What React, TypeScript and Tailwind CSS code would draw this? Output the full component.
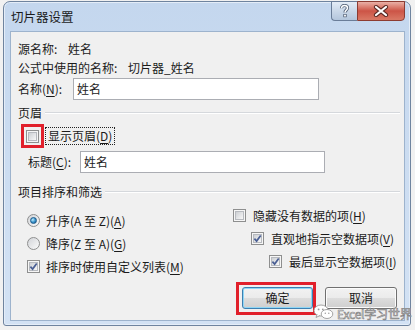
import React from 'react';

const font = "font-['Noto_Sans_CJK_SC','Microsoft_YaHei',sans-serif]";

function U({ children }: { children: React.ReactNode }) {
  return <span className="underline decoration-[1px] underline-offset-[2px]">{children}</span>;
}

function CheckBox({ checked = false }: { checked?: boolean }) {
  return (
    <span className="relative flex h-[13px] w-[13px] shrink-0 items-center justify-center border border-[#8e8f8f] bg-[#f6f6f6]">
      <span className="h-[9px] w-[9px] border border-[#b7babf] bg-linear-to-br from-[#cdd0d4] to-[#f8f8f8]" />
      {checked && (
        <svg className="absolute left-[1px] top-[1px]" width="9" height="9" viewBox="0 0 9 9">
          <path d="M1.4 4.6 L3.6 7.1 L7.7 1.5" fill="none" stroke="#4a5f94" strokeWidth="1.7" />
        </svg>
      )}
    </span>
  );
}

function Radio({ checked = false }: { checked?: boolean }) {
  return (
    <span className="flex h-[13px] w-[13px] shrink-0 items-center justify-center rounded-full border border-[#8e8f8f] bg-linear-to-br from-[#d2d4d8] to-[#fbfbfb]">
      {checked && (
        <span className="h-[7px] w-[7px] rounded-full border border-[#1d5a8a] bg-[radial-gradient(circle_at_35%_35%,#c4ecfc_0%,#3c98cf_50%,#0f5690_100%)]" />
      )}
    </span>
  );
}

function TextBox({ value, width }: { value: string; width: string }) {
  return (
    <div className={`flex h-[22px] items-center border border-[#abadb3] bg-white pl-[3px] ${width}`}>{value}</div>
  );
}

function Section({ title }: { title: string }) {
  return (
    <div className="flex h-[16px] items-center">
      <span>{title}</span>
      <div className="ml-[3px] mr-[4px] h-[2px] flex-1 border-t border-b border-t-[#d5d8dc] border-b-white" />
    </div>
  );
}

export default function App() {
  return (
    <div className={`relative h-[330px] w-[415px] overflow-hidden bg-[#f1f1f1] text-[12px] leading-none text-[#1b1b1b] ${font}`}>
      <div className="ml-[3px] mt-px flex h-[325px] w-[408px] flex-col rounded-t-[7px] rounded-b-[3px] border border-[#6f849f] bg-linear-to-b from-[#c4d7ee] to-[#d3e2f4] shadow-[inset_0_0_0_1px_#e4edf8]">
        {/* title bar */}
        <div className="flex h-[29px] shrink-0 items-start">
          <span className="pl-[7px] pt-[9px] text-[12.5px]">切片器设置</span>
          <div className="ml-auto mr-[5px] -mt-px flex h-[20px]">
            <div className="flex w-[26px] items-center justify-center rounded-bl-[4px] border border-r-0 border-[#6a7d98] bg-linear-to-b from-[#e4ecf6] via-[#cad8e9] to-[#b4c6dc]">
              <svg width="11" height="14" viewBox="0 0 11 14">
                <path d="M2.5 4.2 C2.5 2.3 3.9 1.5 5.5 1.5 C7.3 1.5 8.5 2.5 8.5 4 C8.5 5.9 6 6.2 6 8.6" fill="none" stroke="#56647a" strokeWidth="3.2" />
                <rect x="4.3" y="10" width="3.4" height="3.2" fill="#56647a" />
                <path d="M2.5 4.2 C2.5 2.3 3.9 1.5 5.5 1.5 C7.3 1.5 8.5 2.5 8.5 4 C8.5 5.9 6 6.2 6 8.6" fill="none" stroke="#ffffff" strokeWidth="1.5" />
                <rect x="5.1" y="10.7" width="1.8" height="1.8" fill="#ffffff" />
              </svg>
            </div>
            <div className="flex w-[48px] items-center justify-center rounded-br-[4px] border border-[#8d3b31] bg-linear-to-b from-[#e9b0a6] via-[#cc5446] to-[#d97865]">
              <svg width="16" height="12" viewBox="0 0 16 12">
                <path d="M3 2 L13 10 M13 2 L3 10" stroke="#5b2a24" strokeWidth="4.2" strokeLinecap="round" />
                <path d="M3 2 L13 10 M13 2 L3 10" stroke="#ffffff" strokeWidth="2.2" strokeLinecap="round" />
              </svg>
            </div>
          </div>
        </div>

        {/* dialog body */}
        <div className="mb-[4px] ml-[6px] mr-[5px] flex flex-1 flex-col border border-[#9db3cd] bg-[#f0f0f0] pl-[7px]">
          <div className="mt-[7px] flex h-[19px] items-center">
            <span className="w-[50px]">源名称:</span>
            <span>姓名</span>
          </div>
          <div className="flex h-[19px] items-center">
            <span className="w-[110px]">公式中使用的名称:</span>
            <span>切片器_姓名</span>
          </div>
          <div className="mt-px flex h-[22px] items-center">
            <span className="w-[55px]">
              名称(<U>N</U>):
            </span>
            <TextBox value="姓名" width="w-[246px]" />
          </div>

          <div className="mt-[5px]">
            <Section title="页眉" />
          </div>
          <div className="mt-[3px] flex h-[24px] items-center">
            <div className="ml-[3px] flex h-[24px] w-[23px] items-center justify-center border-[3px] border-[#e1202b]">
              <CheckBox />
            </div>
            <span className="ml-px flex h-[18px] items-center border border-dotted border-[#222] px-[2px]">
              显示页眉(<U>D</U>)
            </span>
          </div>
          <div className="mt-[3px] flex h-[22px] items-center">
            <span className="w-[62px] pl-[10px]">
              标题(<U>C</U>):
            </span>
            <TextBox value="姓名" width="w-[245px]" />
          </div>

          <div className="mt-[11px]">
            <Section title="项目排序和筛选" />
          </div>

          <div className="mt-[4px] flex">
            <div className="flex w-[215px] flex-col pl-[9px] pt-[5px]">
              <div className="flex h-[23px] items-center gap-[6px]">
                <Radio checked />
                <span>
                  升序(A 至 Z)(<U>A</U>)
                </span>
              </div>
              <div className="flex h-[23px] items-center gap-[6px]">
                <Radio />
                <span>
                  降序(Z 至 A)(<U>G</U>)
                </span>
              </div>
              <div className="flex h-[23px] items-center gap-[6px]">
                <CheckBox checked />
                <span>
                  排序时使用自定义列表(<U>M</U>)
                </span>
              </div>
            </div>
            <div className="flex flex-col">
              <div className="flex h-[23px] items-center gap-[7px]">
                <CheckBox />
                <span>
                  隐藏没有数据的项(<U>H</U>)
                </span>
              </div>
              <div className="flex h-[23px] items-center gap-[7px] pl-[18px]">
                <CheckBox checked />
                <span>
                  直观地指示空数据项(<U>V</U>)
                </span>
              </div>
              <div className="flex h-[23px] items-center gap-[7px] pl-[36px]">
                <CheckBox checked />
                <span>
                  最后显示空数据项(<U>I</U>)
                </span>
              </div>
            </div>
          </div>

          <div className="mt-[4px] flex items-start justify-end pr-[7px]">
            <div className="h-[33px] w-[80px] border-[3px] border-[#e1202b] pl-[3px] pt-[2px]">
              <div className="flex h-[22px] w-full items-center justify-center rounded-[3px] border border-[#3c7fb1] bg-[linear-gradient(to_bottom,#f2f2f2_0%,#ebebeb_50%,#dddddd_50%,#cfcfcf_100%)] shadow-[inset_0_0_0_1px_#8fd6f5]">
                确定
              </div>
            </div>
            <div className="ml-[9px] mt-[5px] flex h-[22px] w-[72px] items-center justify-center rounded-[3px] border border-[#707070] bg-[linear-gradient(to_bottom,#f2f2f2_0%,#ebebeb_50%,#dddddd_50%,#cfcfcf_100%)] shadow-[inset_0_0_0_1px_#fcfcfc]">
              取消
            </div>
          </div>
        </div>
      </div>

      {/* watermark */}
      <div className="absolute left-[313px] top-[304px] flex items-center gap-[3px]">
        <svg width="21" height="16" viewBox="0 0 21 16">
          <ellipse cx="8" cy="6.5" rx="7" ry="5.5" fill="#ffffff" stroke="#9a9a9a" strokeWidth="0.9" />
          <path d="M4 10.5 L3 13.5 L6.8 11.6" fill="#ffffff" stroke="#9a9a9a" strokeWidth="0.9" />
          <ellipse cx="14" cy="10" rx="5.8" ry="4.5" fill="#ffffff" stroke="#9a9a9a" strokeWidth="0.9" />
          <circle cx="5.6" cy="5.4" r="0.9" fill="#9a9a9a" />
          <circle cx="9.8" cy="5.4" r="0.9" fill="#9a9a9a" />
          <circle cx="12.3" cy="9.3" r="0.7" fill="#9a9a9a" />
          <circle cx="15.8" cy="9.3" r="0.7" fill="#9a9a9a" />
        </svg>
        <span className="mt-[3px] text-[12px] tracking-[-0.2px] text-[#f7f7f7] [-webkit-text-stroke:0.6px_#7c7c7c]">Excel学习世界</span>
      </div>
    </div>
  );
}
